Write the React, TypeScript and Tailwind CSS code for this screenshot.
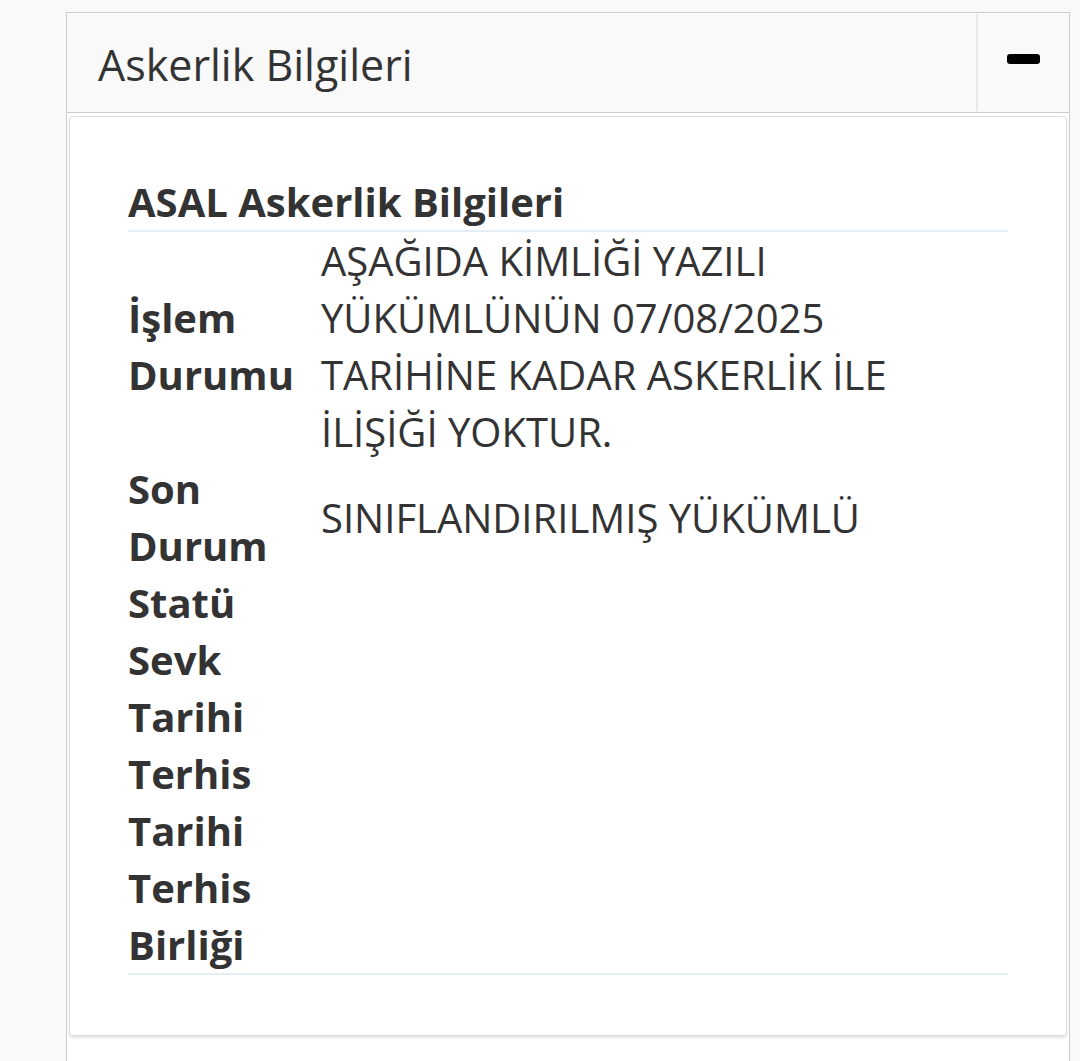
import React from 'react';

const rows: { label: string; value: string }[] = [
  { label: 'İşlem Durumu', value: 'AŞAĞIDA KİMLİĞİ YAZILI YÜKÜMLÜNÜN 07/08/2025 TARİHİNE KADAR ASKERLİK İLE İLİŞİĞİ YOKTUR.' },
  { label: 'Son Durum', value: 'SINIFLANDIRILMIŞ YÜKÜMLÜ' },
  { label: 'Statü', value: '' },
  { label: 'Sevk Tarihi', value: '' },
  { label: 'Terhis Tarihi', value: '' },
  { label: 'Terhis Birliği', value: '' },
];

export default function App() {
  return (
    <div
      className="min-h-[1061px] bg-[#f9f9f9] pt-[12px] pl-[66px] pr-[10px] text-[#333333]"
      style={{ fontFamily: '"Open Sans", "Noto Sans", sans-serif' }}
    >
      <div className="border border-[#cccccc] bg-white min-h-[1100px]">
        <div className="flex h-[100px] bg-[#f9f9f9] border-b border-[#cccccc]">
          <div className="flex-1 flex items-center pl-[31px] pt-[3px] text-[43px] leading-none">
            Askerlik Bilgileri
          </div>
          <button className="w-[93px] flex justify-center pt-[40px] border-l-2 border-[#e8e8e8] my-[1px]">
            <span className="block w-[33px] h-[10px] rounded-[3px] bg-black" />
          </button>
        </div>

        <div className="px-[2px] pt-[3px] pb-[4px]">
          <div className="border border-[#dddddd] rounded-[4px] bg-white shadow-[0_2px_3px_rgba(0,0,0,0.12)] px-[58px] pt-[56px] pb-[60px]">
            <h3 className="text-[40px] leading-[57px] font-bold">ASAL Askerlik Bilgileri</h3>
            <div className="h-[2px] bg-[#e4edf4]" />
            <div className="grid grid-cols-[193px_1fr] items-center text-[40px] leading-[57px]">
              {rows.map((r) => (
                <React.Fragment key={r.label}>
                  <div className="font-bold">{r.label}</div>
                  <div className="pr-[30px]">{r.value}</div>
                </React.Fragment>
              ))}
            </div>
            <div className="h-[2px] bg-[#e4edf4]" />
          </div>
        </div>
      </div>
    </div>
  );
}
